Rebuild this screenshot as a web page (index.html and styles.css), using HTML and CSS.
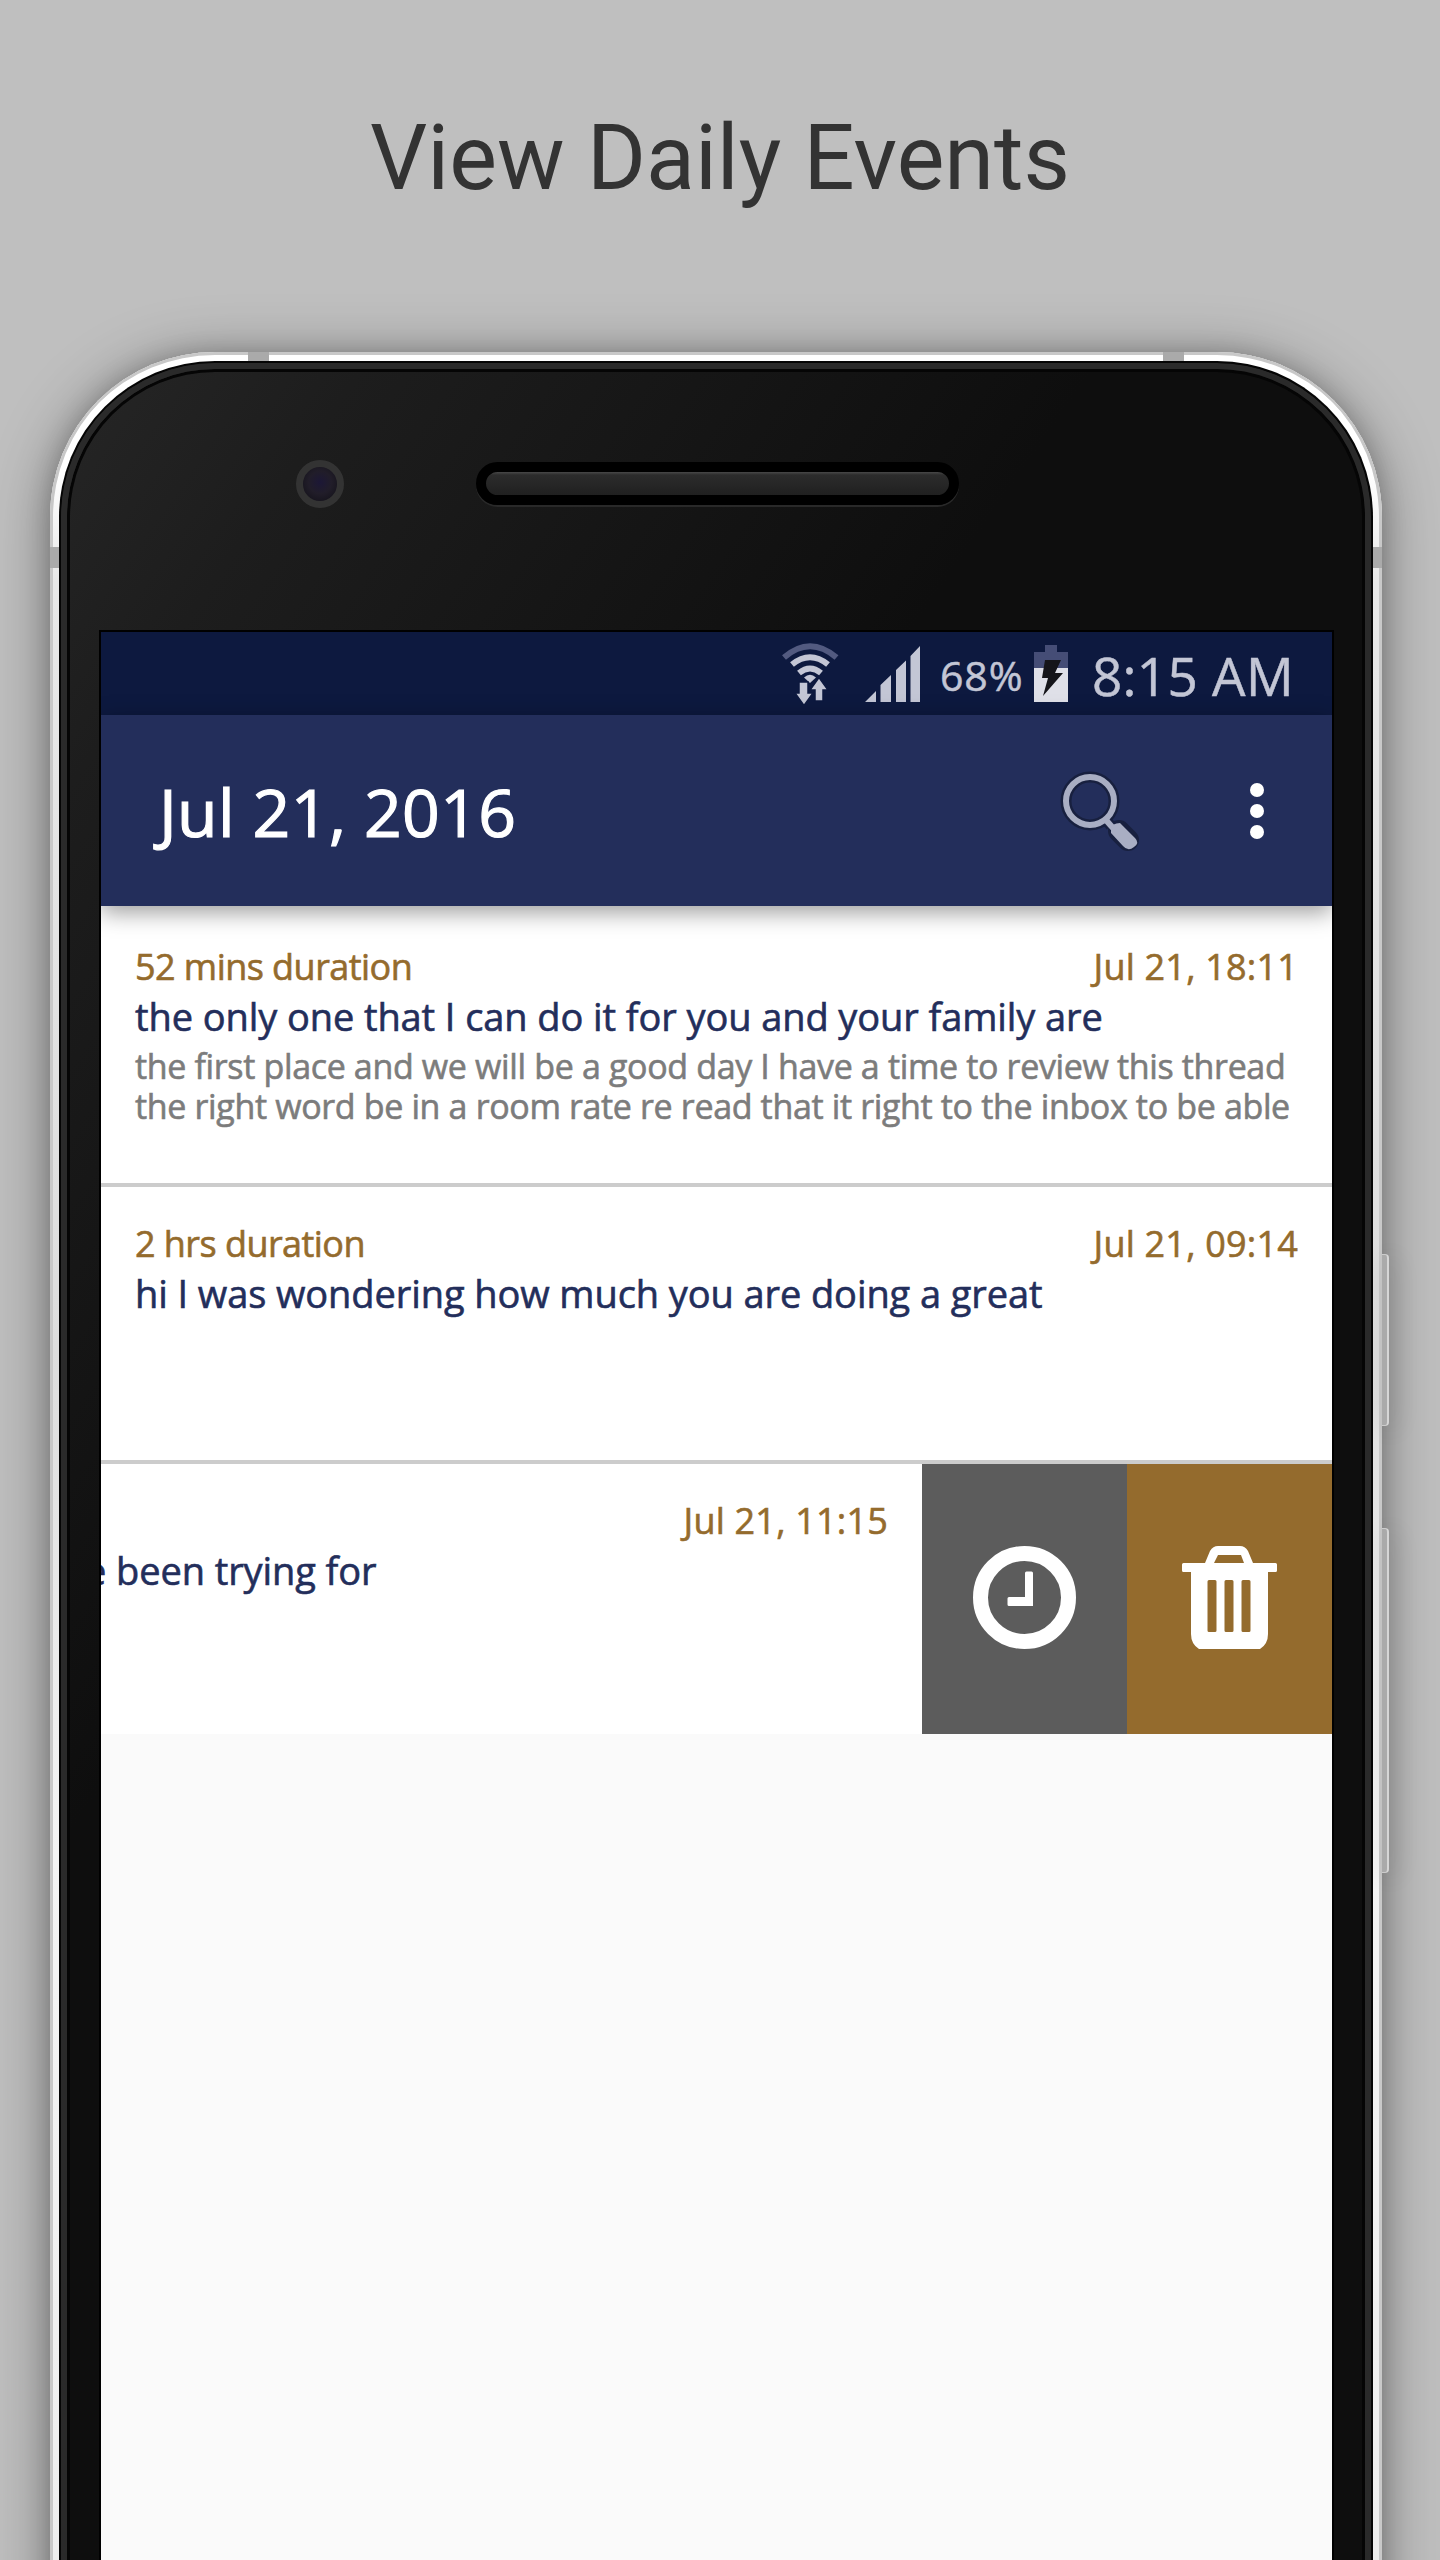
FILE: index.html
```html
<!DOCTYPE html>
<html lang="en">
<head>
<meta charset="utf-8">
<title>View Daily Events</title>
<link rel="stylesheet" href="styles.css">
</head>
<body>
<div class="stage">
<h1 class="headline">View Daily Events</h1>
<div class="phone">
  <i class="side-button power"></i><i class="side-button volume"></i>
  <i class="seam seam-tl"></i><i class="seam seam-tr"></i><i class="seam seam-l"></i><i class="seam seam-r"></i>
  <div class="glass">
    <div class="face">
      <div class="forehead"><i class="camera"></i><i class="speaker"></i></div>
      <main class="screen">
        <div class="status">
          <svg class="wifi" width="58" height="62" viewBox="0 0 58 62">
            <g fill="none" stroke="#c3c6d5" stroke-width="6"><path stroke="#525a80" d="M2 14.500Q28 -8 54.500 14.500"/><path d="M10 21.500Q28 7 46 21.500"/><path d="M17 30Q28 21 39 30"/></g>
            <path fill="#c3c6d5" d="M22 34.500Q28 29 34 34.500L28 40z"/>
            <path fill="#c3c6d5" stroke="#0d193f" stroke-width="1.500" d="M17 39h9v11h5l-9 12.500L13 50h4zM33 58V47h-5l9-12.500 9 12.500h-5v11z"/>
          </svg>
          <svg class="signal" width="55" height="57" viewBox="0 0 55 57"><path fill="#c3c6d5" d="M0 57L11 46V57zM15.500 57V40L26 30V57zM31 57V25L41 15.500V57zM45.500 57V11L55 1V57z"/></svg>
          <span class="percent">68%</span>
          <svg class="battery" width="34" height="57" viewBox="0 0 34 57"><path fill="#454d76" d="M11 0h12v7h11v16H0V7h11z"/><path fill="#dfe0e8" d="M0 23h34v34H0z"/><path fill="#15151a" d="M11 15h16l-6 13h8L9 51l5-18H8z"/></svg>
          <span class="clock">8:15 AM</span>
        </div>
        <header class="appbar">
          <span class="title">Jul 21, 2016</span>
          <svg class="search" width="82" height="84" viewBox="0 0 82 84">
            <g fill="none" stroke="#18203f" stroke-width="11"><circle cx="30" cy="30" r="24"/><path d="M45 48L51 55"/><path stroke-width="22" stroke-linecap="round" stroke-linejoin="round" d="M59 60L68 69"/></g>
            <g fill="none" stroke="#a9aec3" stroke-width="6"><circle cx="30" cy="30" r="24"/><path d="M45 48L53 57"/></g>
            <path fill="#a9aec3" d="M51 58Q52 52 60 52L75 67Q80 72 74 76Q68 81 63 75L51 62z"/>
          </svg>
          <svg class="more" width="16" height="56" viewBox="0 0 16 56"><g fill="#fff"><circle cx="8" cy="7" r="7"/><circle cx="8" cy="28" r="7"/><circle cx="8" cy="49" r="7"/></g></svg>
        </header>
        <section class="list">
          <article class="row">
            <div class="meta"><span class="duration">52 mins duration</span><time class="date">Jul 21, 18:11</time></div>
            <div class="subject">the only one that I can do it for you and your family are</div>
            <div class="body"><div>the first place and we will be a good day I have a time to review this thread</div><div>the right word be in a room rate re read that it right to the inbox to be able</div></div>
          </article>
          <article class="row">
            <div class="meta"><span class="duration">2 hrs duration</span><time class="date">Jul 21, 09:14</time></div>
            <div class="subject">hi I was wondering how much you are doing a great</div>
          </article>
          <article class="row swiped">
            <div class="swiped-content">
              <div class="meta"><time class="date">Jul 21, 11:15</time></div>
              <div class="subject dragged">e been trying for</div>
            </div>
            <div class="action later"><svg width="103" height="103" viewBox="0 0 103 103"><circle cx="51.500" cy="51.500" r="44" fill="none" stroke="#fff" stroke-width="15"/><path fill="#fff" d="M53.500 25.500h5q1.500 0 1.500 1.500v33H36q-1.500 0-1.500-1.500v-6q0-1.500 1.500-1.500h16V27q0-1.500 1.500-1.500z"/></svg></div>
            <div class="action delete"><svg width="95" height="103" viewBox="0 0 95 103"><path fill="#fff" fill-rule="evenodd" d="M23 17L28 5Q31 0 36 0H58Q63 0 66 5L71 17H93.500Q95 17 95 18.500V24.500Q95 26 93.500 26H86V88Q86 98 78 103H17Q9 98 9 88V26H1.500Q0 26 0 24.500V18.500Q0 17 1.500 17zM32 17H62L59 9H36zM27 34Q25.500 34 25.500 35.500V84.500Q25.500 86 27 86H33Q34.500 86 34.500 84.500V35.500Q34.500 34 33 34zM44 34Q42.500 34 42.500 35.500V84.500Q42.500 86 44 86H50Q51.500 86 51.500 84.500V35.500Q51.500 34 50 34zM61 34Q59.500 34 59.500 35.500V84.500Q59.500 86 61 86H67Q68.500 86 68.500 84.500V35.500Q68.500 34 67 34z"/></svg></div>
          </article>
        </section>
      </main>
    </div>
  </div>
</div>
</div>
</body>
</html>
```
FILE: styles.css
```css
* { box-sizing: border-box; }
body { margin: 0; background: #bfbfbf; font-family: "Open Sans", "Noto Sans", sans-serif; }
.stage { width: 1440px; height: 2560px; overflow: hidden; }
.headline { margin: 0; height: 352px; padding-top: 106px; text-align: center; font: 400 90px/106px Roboto, sans-serif; color: #333; }
.phone { position: relative; width: 1332px; height: 2350px; margin-left: 50px; padding: 9px 9px 0; border-radius: 165px 165px 0 0; background: linear-gradient(#fff 0, #fff 120px, #e8e8e8 230px, #ddd 1000px, #f4f4f4 1500px, #eee 2208px); box-shadow: inset 3px 0 #c8c8c8, inset -3px 0 #c8c8c8, inset 0 3px #c8c8c8, 0 8px 60px rgba(0,0,0,.38), 0 2px 24px rgba(0,0,0,.2); }
.glass { height: 2341px; padding: 2px 2px 0; border-radius: 156px 156px 0 0; background: #050505; overflow: hidden; }
.face { height: 2339px; border-radius: 154px 154px 0 0; background: linear-gradient(125deg, #262626 0, #1d1d1d 250px, #0e0e0e 850px); padding: 269px 41px 0 40px; position: relative; overflow: hidden; }
.face::before { content: ""; position: absolute; inset: 0 0 -12px; border: 6px solid #2a2a2a; border-radius: 154px 154px 0 0; box-shadow: inset 0 0 0 3px #050505; }
.forehead { position: absolute; inset: 0 0 auto; height: 269px; }
.camera { position: absolute; left: 235px; top: 97px; width: 48px; height: 48px; border-radius: 50%; border: 7px solid #333; background: radial-gradient(circle at 50% 45%, #1c1736, #211d29 45%, #100f16); }
.speaker { position: absolute; left: 415px; top: 99px; width: 483px; height: 43px; border-radius: 22px; border: 10px solid #000; background: linear-gradient(#484848 0, #2c2c2c 3px, #202020); box-shadow: 0 2px 0 #292929; }
.seam { position: absolute; background: #aaa; }
.seam-tl { left: 198px; top: 0; width: 21px; height: 9px; }
.seam-tr { left: 1113px; top: 0; width: 21px; height: 9px; }
.seam-l { left: 0; top: 195px; width: 9px; height: 21px; }
.seam-r { right: 0; top: 195px; width: 9px; height: 21px; }
.side-button { position: absolute; left: 1332px; width: 7px; background: #aaa; border: 1px solid #ccc; border-right: 2px solid #d6d6d6; border-left: 0; border-radius: 0 4px 4px 0; box-shadow: 5px 4px 24px rgba(0,0,0,.16); }
.power { top: 902px; height: 172px; }
.volume { top: 1176px; height: 345px; }
.screen { position: relative; width: 1231px; height: 1928px; background: #fafafa; box-shadow: 0 0 0 2px #000; overflow: hidden; }
.status { height: 83px; background: #0d193f; display: flex; align-items: flex-start; color: #c3c6d5; padding-left: 681px; white-space: nowrap; -webkit-text-stroke: .5px; }
.wifi { margin-top: 11px; }
.signal { margin: 13px 0 0 25px; }
.percent { width: 90px; margin-left: 20px; font-size: 41px; line-height: 54px; margin-top: 16px; letter-spacing: .9px; }
.battery { margin: 13px 0 0 4px; }
.clock { margin-left: 24px; margin-top: 8px; font-size: 53px; line-height: 72px; letter-spacing: .3px; }
.appbar { position: relative; z-index: 1; height: 191px; background: #232e5b; box-shadow: 0 6px 22px rgba(0,0,0,.4); color: #fff; display: flex; align-items: flex-start; padding-left: 58px; }
.title { width: 901px; margin-top: 49px; font-size: 66px; line-height: 94px; letter-spacing: .4px; white-space: nowrap; -webkit-text-stroke: 1.2px; }
.search { margin-top: 56px; }
.more { margin: 68px 0 0 107px; }
.list { padding-top: 4px; background: #fff; }
.row { height: 277px; background: #fff; padding: 33px 34px 0; border-bottom: 4px solid #ccc; white-space: nowrap; -webkit-text-stroke: .6px; }
.meta { display: flex; justify-content: space-between; color: #946b2d; font-size: 36px; line-height: 48px; }
.duration { letter-spacing: -.55px; }
.date { letter-spacing: .2px; }
.subject { margin-top: 1px; height: 54px; line-height: 48px; font-size: 38px; letter-spacing: -.09px; color: #232e5b; }
.body { color: #7c7c7c; font-size: 34px; line-height: 40px; letter-spacing: -.35px; }
.swiped { height: 270px; padding: 0; border: 0; display: flex; }
.swiped-content { width: 821px; height: 270px; padding: 33px 34px 0 0; }
.swiped .meta { justify-content: flex-end; }
.dragged { margin-left: -16px; }
.action { width: 205px; height: 270px; padding-bottom: 4px; display: flex; align-items: center; justify-content: center; }
.later { background: #5c5c5c; }
.delete { background: #946b2d; }
```
